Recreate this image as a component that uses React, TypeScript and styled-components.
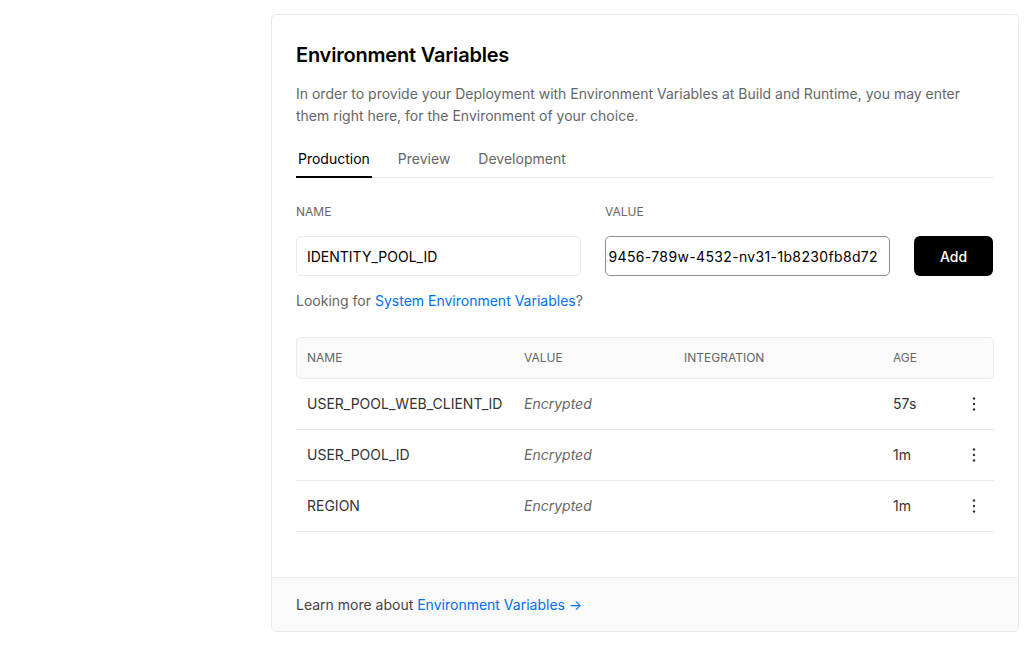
import styled, { createGlobalStyle } from "styled-components"

const GlobalStyle = createGlobalStyle`
    * { box-sizing: border-box; }
    body {
        margin: 0;
        background: #fff;
        font-family: Inter, "Noto Sans", sans-serif;
        color: #000;
        -webkit-font-smoothing: antialiased;
    }
`

const Page = styled.div`
    padding: 14px 0 0 271px;
`

const Card = styled.section`
    width: 748px;
    border: 1px solid #eaeaea;
    border-radius: 5px;
    overflow: hidden;
    background: #fff;
`

const Body = styled.div`
    padding: 26px 24px 45px;
`

const Title = styled.h2`
    margin: 0;
    font-size: 20px;
    line-height: 28px;
    font-weight: 600;
    letter-spacing: -0.2px;
`

const Description = styled.p`
    margin: 14px 0 0;
    font-size: 14px;
    line-height: 22px;
    color: #666;
`

const Tabs = styled.div`
    margin-top: 22px;
    display: flex;
    gap: 24px;
    border-bottom: 1px solid #eaeaea;
`

const Tab = styled.div<{ $active?: boolean }>`
    padding: 0 2px 7px;
    font-size: 14px;
    line-height: 20px;
    color: ${p => (p.$active ? "#000" : "#666")};
    border-bottom: 2px solid ${p => (p.$active ? "#000" : "transparent")};
    margin-bottom: -1px;
`

const FormRow = styled.div`
    margin-top: 26px;
    display: grid;
    grid-template-columns: 285px 285px 79px;
    column-gap: 24px;
    align-items: end;
`

const Field = styled.div`
    display: flex;
    flex-direction: column;
    gap: 16px;
`

const Label = styled.span`
    font-size: 12px;
    line-height: 16px;
    color: #666;
    text-transform: uppercase;
`

const InputBox = styled.div<{ $focused?: boolean }>`
    height: 40px;
    border: 1px solid ${p => (p.$focused ? "#8f8f8f" : "#eaeaea")};
    border-radius: 5px;
    display: flex;
    align-items: center;
    padding: ${p => (p.$focused ? "0 0 0 1px" : "0 10px")};
    font-size: 14px;
    color: #000;
    overflow: hidden;
    white-space: nowrap;
`

const Scroller = styled.div`
    flex: 1;
    overflow: hidden;
    display: flex;
    justify-content: flex-end;
`

const ScrollText = styled.span`
    padding-right: 11px;
    white-space: nowrap;
    letter-spacing: 0.35px;
`

const AddButton = styled.button`
    height: 40px;
    border: none;
    border-radius: 6px;
    background: #000;
    color: #fff;
    font-family: inherit;
    font-size: 14px;
    font-weight: 500;
    cursor: pointer;
`

const Hint = styled.p`
    margin: 15px 0 0;
    font-size: 14px;
    line-height: 20px;
    color: #666;
`

const Link = styled.a`
    color: #0070f3;
    text-decoration: none;
`

const Table = styled.div`
    margin-top: 26px;
`

const Grid = styled.div`
    display: grid;
    grid-template-columns: 217px 160px 209px 1fr 40px;
    padding-left: 11px;
    align-items: center;
`

const HeadRow = styled(Grid)`
    height: 42px;
    background: #fafafa;
    border: 1px solid #eaeaea;
    border-radius: 5px;
    font-size: 12px;
    color: #666;
    text-transform: uppercase;
    padding-left: 10px;
    padding-bottom: 1px;
`

const Row = styled(Grid)`
    height: 51px;
    border-bottom: 1px solid #eaeaea;
    font-size: 14px;
    color: #333;
    padding-bottom: 1px;
`

const Muted = styled.span`
    color: #666;
    font-style: italic;
`

const Kebab = styled.div`
    display: flex;
    justify-content: center;
    color: #333;
`

const Footer = styled.div`
    height: 54px;
    background: #fafafa;
    border-top: 1px solid #eaeaea;
    padding: 0 24px 1px;
    display: flex;
    align-items: center;
    font-size: 14px;
    color: #444;
`

const Dots = () => (
    <svg width="16" height="16" viewBox="0 0 16 16">
        <circle cx="8" cy="2.5" r="1.2" fill="currentColor" />
        <circle cx="8" cy="8" r="1.2" fill="currentColor" />
        <circle cx="8" cy="13.5" r="1.2" fill="currentColor" />
    </svg>
)

const rows = [
    { name: "USER_POOL_WEB_CLIENT_ID", age: "57s" },
    { name: "USER_POOL_ID", age: "1m" },
    { name: "REGION", age: "1m" },
]

export default function App() {
    return (
        <Page>
            <GlobalStyle />
            <Card>
                <Body>
                    <Title>Environment Variables</Title>
                    <Description>
                        In order to provide your Deployment with Environment Variables at Build and Runtime, you may enter
                        them right here, for the Environment of your choice.
                    </Description>
                    <Tabs>
                        <Tab $active>Production</Tab>
                        <Tab>Preview</Tab>
                        <Tab>Development</Tab>
                    </Tabs>
                    <FormRow>
                        <Field>
                            <Label>Name</Label>
                            <InputBox>IDENTITY_POOL_ID</InputBox>
                        </Field>
                        <Field>
                            <Label>Value</Label>
                            <InputBox $focused>
                                <Scroller>
                                    <ScrollText>a7f29456-789w-4532-nv31-1b8230fb8d72</ScrollText>
                                </Scroller>
                            </InputBox>
                        </Field>
                        <AddButton>Add</AddButton>
                    </FormRow>
                    <Hint>
                        Looking for <Link href="#">System Environment Variables</Link>?
                    </Hint>
                    <Table>
                        <HeadRow>
                            <span>Name</span>
                            <span>Value</span>
                            <span>Integration</span>
                            <span>Age</span>
                            <span />
                        </HeadRow>
                        {rows.map(r => (
                            <Row key={r.name}>
                                <span>{r.name}</span>
                                <Muted>Encrypted</Muted>
                                <span />
                                <span>{r.age}</span>
                                <Kebab><Dots /></Kebab>
                            </Row>
                        ))}
                    </Table>
                </Body>
                <Footer>
                    Learn more about&nbsp;<Link href="#">Environment Variables →</Link>
                </Footer>
            </Card>
        </Page>
    )
}
